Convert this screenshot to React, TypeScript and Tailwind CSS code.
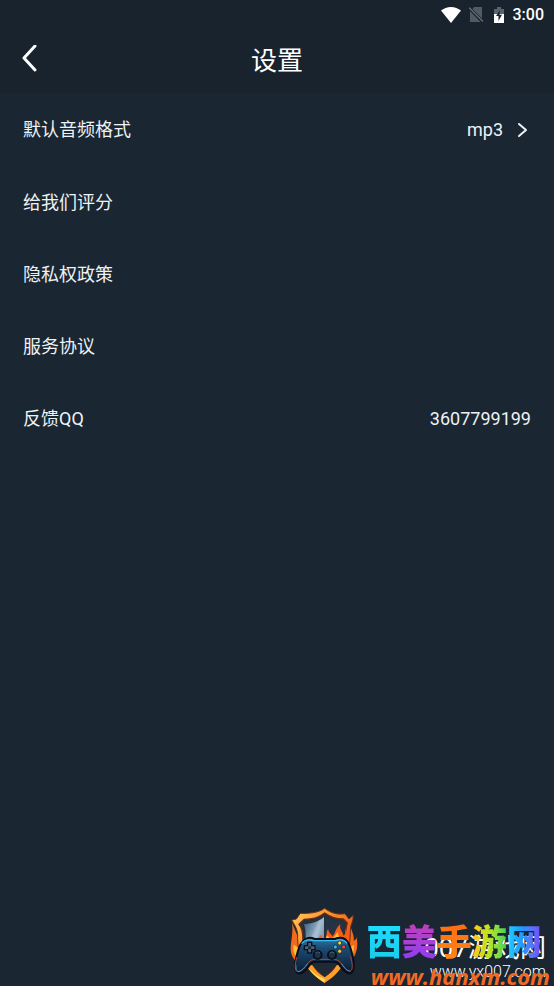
import React from 'react';

interface SettingItem {
  label: string;
  value?: string;
  arrow?: boolean;
}

const items: SettingItem[] = [
  { label: '默认音频格式', value: 'mp3', arrow: true },
  { label: '给我们评分' },
  { label: '隐私权政策' },
  { label: '服务协议' },
  { label: '反馈QQ', value: '3607799199' },
];

const StatusBar: React.FC = () => (
  <div className="flex h-[29px] items-center justify-end pr-[10px] text-white">
    <svg className="mr-2 h-4 w-5" viewBox="0 0 20 16" fill="currentColor" aria-hidden="true">
      <path d="M0 3.6C2.7 1.5 6.1 0 10 0s7.3 1.5 10 3.6L10 16z" />
    </svg>
    <svg className="mr-2 h-4 w-4" viewBox="0 0 16 16" aria-hidden="true">
      <path d="M5 0h8v11.500L3.500 2zM1 4l10.500 11H1z" fill="#525b63" />
      <path d="M0 .5l14 14" stroke="#626b73" strokeWidth="1.4" />
    </svg>
    <svg className="mr-2 h-4 w-3" viewBox="0 0 12 16" aria-hidden="true">
      <path d="M4 0h4v2h3v5H1V2h3z" fill="#59636c" />
      <path d="M1 7h10v9H1z" fill="#fff" />
      <path d="M7 3L3 9h2.500v5L9 7.800H6.500z" fill="#18232d" />
    </svg>
    <span className="text-base font-medium">3:00</span>
  </div>
);

const ShieldLogo: React.FC = () => (
  <svg className="h-20 w-[70px] shrink-0" viewBox="30 20 210 240" strokeLinejoin="round" aria-hidden="true">
    <defs>
      <linearGradient id="rim" x1="0" y1="0" x2="1" y2="1">
        <stop offset="0" stopColor="#ffd061" />
        <stop offset="0.4" stopColor="#f58a27" />
        <stop offset="0.7" stopColor="#e9501b" />
        <stop offset="1" stopColor="#ffa32b" />
      </linearGradient>
      <linearGradient id="steel" x1="0" y1="0" x2="1" y2="1">
        <stop offset="0" stopColor="#31506f" />
        <stop offset="0.5" stopColor="#9db8cf" />
        <stop offset="1" stopColor="#45637e" />
      </linearGradient>
      <linearGradient id="pad" x1="0" y1="0" x2="0" y2="1">
        <stop offset="0" stopColor="#2b77a8" />
        <stop offset="0.3" stopColor="#1b4b73" />
        <stop offset="1" stopColor="#0c192b" />
      </linearGradient>
    </defs>
    <path d="M38 68C45 92 34 132 35 151c1 17 9 28 18 37l14-50zM215 70c-3 20 13 35 9 54 6-2 8-7 8-12 7 26 2 52-17 76l-18-50z" fill="#f26a1c" />
    <path d="M44 136c-3 15 0 27 8 36l8-25zM224 137c3 15-2 28-9 38l-7-28z" fill="#ffbd36" />
    <path d="M137 27c20 15 39 20 61 16l12 16 12-11c3 17-8 27-8 43 0 64-12 112-77 160C72 206 54 164 56 106c-1-18-9-28-18-44l14-3 12-17c24 1 54-1 73-15z" fill="url(#rim)" stroke="#742912" strokeWidth="3" />
    <path d="M137 41c19 13 34 18 56 18l12 12c-7 17-4 32-6 53-4 50-24 83-62 111-38-28-60-62-65-111-1-19 1-34-12-49l16-15c23 0 44-5 61-19z" fill="#26303d" stroke="#702711" strokeWidth="4" />
    <path d="M135 53v150c-33-24-55-54-55-96 0-12-1-22-6-32 23-2 44-8 61-22z" fill="url(#steel)" />
    <path d="M140 53c15 12 32 17 54 18-4 12-3 22-4 37-2 44-23 71-50 95z" fill="#253445" />
    <path d="M119 65l-28 62 15 13 24-81z" fill="#c2d1df" opacity="0.35" />
    <path d="M91 190l46 42 45-42v-12H91z" fill="#202a35" />
    <path d="M81 194c14 25 32 42 56 56 25-15 43-33 56-57l-20 5c-9 16-20 26-36 36-16-10-28-21-37-36z" fill="#ff9f2b" />
    <path d="M84 200c14 18 29 29 53 39v11c-24-14-42-30-53-50z" fill="#ffdb59" />
    <path d="M104 127c5-8 16-8 20-21 8 6 6 12 13 13 11-9 1-19 11-30 0 12 8 14 13 22 10-11 7-23 23-36-4 15 8 21 9 34 8-4 7-12 5-20 15 19 10 33 13 50l-12 20H101z" fill="#f75d13" />
    <path d="M128 127c8-7 13-7 16-20 4 6 8 8 10 14 12-5 15-16 23-24 0 13 6 15 7 26 7 0 10-4 12-10 4 11 2 22-3 29z" fill="#ffb932" />
    <path d="M163 126c6-5 10-9 12-16 4 8 5 12 2 17z" fill="#ffef85" />
    <path d="M84 117c9-4 17-1 23 2h60c10-4 21-5 31 0 13 9 19 31 24 56 4 22 4 38-5 46-10 7-22-5-37-26-4-6-9-8-16-8h-55c-9 0-14 5-18 11-14 20-26 29-36 22-11-8-8-27-3-47 7-29 14-49 32-56z" fill="url(#pad)" stroke="#080d19" strokeWidth="6" />
    <path d="M68 133c11-14 22-14 36-9h66c15-5 26-3 34 8" fill="none" stroke="#3bbcf1" strokeWidth="4" />
    <path d="M54 173c-8 26-7 43 2 44 11 1 22-12 32-27 7-8 12-10 22-10h53c11 0 18 4 24 13 11 16 20 24 27 22 8-3 7-20 1-44" fill="none" stroke="#a5493d" strokeWidth="3" />
    <path d="M51 198c0 14 3 19 8 18 9-1 18-12 26-23M188 193c10 15 17 22 25 22" fill="none" stroke="#37b4ff" strokeWidth="2" />
    <path d="M86 129h12v10h10v12H98v10H86v-10H76v-12h10z" fill="#526170" stroke="#0a111e" strokeWidth="4" />
    <circle cx="92" cy="145" r="5" fill="#1b2b3a" />
    <circle cx="116" cy="167" r="12" fill="#1c3246" stroke="#09111d" strokeWidth="6" />
    <circle cx="159" cy="167" r="12" fill="#1c3246" stroke="#09111d" strokeWidth="6" />
    <path d="M109 161c4-4 9-4 14 0M152 161c4-4 9-4 14 0" fill="none" stroke="#536777" strokeWidth="3" />
    <g stroke="#101e2d" strokeWidth="2">
      <circle cx="182" cy="131" r="6" fill="#ffd331" />
      <circle cx="194" cy="143" r="6" fill="#f44237" />
      <circle cx="182" cy="156" r="6" fill="#ffc02f" />
      <circle cx="169" cy="143" r="6" fill="#32bdd9" />
    </g>
  </svg>
);

const SiteMark: React.FC = () => (
  <div className="mt-auto flex items-end justify-end pr-1">
    <ShieldLogo />
    <div className="ml-2 grid">
      <div className="col-start-1 row-start-1 flex flex-col items-end self-end pr-1 pb-1 text-white">
        <span className="text-[26px] leading-7">007游戏网</span>
        <span className="text-base leading-5 font-light">www.yx007.com</span>
      </div>
      <div className="relative col-start-1 row-start-1 flex flex-col self-end">
        <span className="flex pr-2 text-[35px] leading-[44px] font-black">
          <span className="bg-linear-to-b from-[#20ddff] to-[#17c9e9] bg-clip-text text-transparent">西</span>
          <span className="bg-linear-to-b from-[#c63bb5] to-[#8735ff] bg-clip-text text-transparent">美</span>
          <span className="bg-linear-to-b from-[#ff6b12] to-[#ff8a16] bg-clip-text text-transparent">手</span>
          <span className="bg-linear-to-r from-[#ffc51c] via-[#b9e51f] to-[#25cf55] bg-clip-text text-transparent">游</span>
          <span className="bg-linear-to-r from-[#20cfff] via-[#258fff] to-[#7444f5] bg-clip-text text-transparent">网</span>
        </span>
        <a href="#site" className="pl-1 font-['Open_Sans',sans-serif] text-[22px] leading-5 font-bold text-[#f06a25] italic">
          www.hanxm.com
        </a>
      </div>
    </div>
  </div>
);

const App: React.FC = () => {
  return (
    <div className="flex min-h-screen flex-col bg-[#1a2632] font-[Roboto,'Noto_Sans_CJK_SC',sans-serif] text-[#edf2f5]">
      <header className="bg-[#18232d]">
        <StatusBar />
        <div className="grid h-16 grid-cols-3 items-center px-4">
          <button type="button" aria-label="返回" className="w-7">
            <svg className="h-8 w-7" viewBox="0 2 28 32" fill="none" stroke="#fff" strokeWidth="3" strokeLinecap="round" strokeLinejoin="round">
              <path d="M19 3L8 15l11 12" />
            </svg>
          </button>
          <h1 className="text-center text-[26px] text-white">设置</h1>
        </div>
      </header>

      <ul className="text-lg">
        {items.map((item) => (
          <li key={item.label}>
            <button type="button" className={`flex w-full items-center justify-between px-[23px] text-left ${item.arrow ? 'h-[74px]' : 'h-[72px]'}`}>
              <span>{item.label}</span>
              <span className="flex items-center">
                {item.value}
                {item.arrow && (
                  <svg className="ml-3 h-4 w-4" viewBox="0 0 16 16" fill="none" stroke="currentColor" strokeWidth="2" strokeLinecap="round" strokeLinejoin="round" aria-hidden="true">
                    <path d="M4 2l7 6-7 6" />
                  </svg>
                )}
              </span>
            </button>
          </li>
        ))}
      </ul>

      <SiteMark />
    </div>
  );
};

export default App;
